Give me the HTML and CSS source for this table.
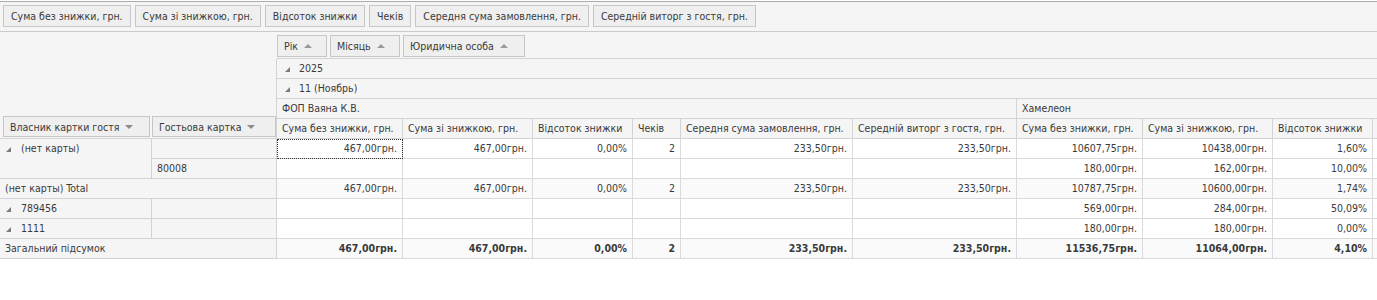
FILE: index.html
```html
<!DOCTYPE html>
<html lang="uk">
<head>
<meta charset="utf-8">
<title>Pivot</title>
<link rel="stylesheet" href="styles.css">
</head>
<body>
<div class="filter-area">
  <div class="fbtn">Сума без знижки, грн.</div>
  <div class="fbtn">Сума зі знижкою, грн.</div>
  <div class="fbtn">Відсоток знижки</div>
  <div class="fbtn">Чеків</div>
  <div class="fbtn">Середня сума замовлення, грн.</div>
  <div class="fbtn">Середній виторг з гостя, грн.</div>
</div>
<div class="pivot">
  <div class="corner">
    <div class="corner-top"></div>
    <div class="corner-bottom">
      <div class="fbtn rowfield rf1">Власник картки гостя<span class="arr-down"></span></div>
      <div class="fbtn rowfield rf2">Гостьова картка<span class="arr-down"></span></div>
    </div>
  </div>
  <div class="colfields">
    <div class="fbtn cf1">Рік<span class="arr-up"></span></div>
    <div class="fbtn cf2">Місяць<span class="arr-up"></span></div>
    <div class="fbtn cf3">Юридична особа<span class="arr-up"></span></div>
  </div>
  <div class="hcell span-all"><span class="exp hexp"></span>2025</div>
  <div class="hcell span-all"><span class="exp hexp"></span>11 (Ноябрь)</div>
  <div class="hcell fop">ФОП Ваяна К.В.</div>
  <div class="hcell ham">Хамелеон</div>
  <div class="hcell">Сума без знижки, грн.</div>
  <div class="hcell">Сума зі знижкою, грн.</div>
  <div class="hcell">Відсоток знижки</div>
  <div class="hcell">Чеків</div>
  <div class="hcell">Середня сума замовлення, грн.</div>
  <div class="hcell">Середній виторг з гостя, грн.</div>
  <div class="hcell">Сума без знижки, грн.</div>
  <div class="hcell">Сума зі знижкою, грн.</div>
  <div class="hcell">Відсоток знижки</div>
  <div class="hcell"></div>

  <!-- row 1 -->
  <div class="rh span-rows"><div class="rh-line"><span class="exp"></span>(нет карты)</div></div>
  <div class="rh"></div>
  <div class="dc focus">467,00грн.</div>
  <div class="dc">467,00грн.</div>
  <div class="dc">0,00%</div>
  <div class="dc">2</div>
  <div class="dc">233,50грн.</div>
  <div class="dc">233,50грн.</div>
  <div class="dc">10607,75грн.</div>
  <div class="dc">10438,00грн.</div>
  <div class="dc">1,60%</div>
  <div class="dc"></div>

  <!-- row 2 -->
  <div class="rh">80008</div>
  <div class="dc"></div>
  <div class="dc"></div>
  <div class="dc"></div>
  <div class="dc"></div>
  <div class="dc"></div>
  <div class="dc"></div>
  <div class="dc">180,00грн.</div>
  <div class="dc">162,00грн.</div>
  <div class="dc">10,00%</div>
  <div class="dc"></div>

  <!-- row 3 -->
  <div class="rh span-cols">(нет карты) Total</div>
  <div class="dc tot">467,00грн.</div>
  <div class="dc tot">467,00грн.</div>
  <div class="dc tot">0,00%</div>
  <div class="dc tot">2</div>
  <div class="dc tot">233,50грн.</div>
  <div class="dc tot">233,50грн.</div>
  <div class="dc tot">10787,75грн.</div>
  <div class="dc tot">10600,00грн.</div>
  <div class="dc tot">1,74%</div>
  <div class="dc tot"></div>

  <!-- row 4 -->
  <div class="rh"><span class="exp"></span>789456</div>
  <div class="rh"></div>
  <div class="dc"></div>
  <div class="dc"></div>
  <div class="dc"></div>
  <div class="dc"></div>
  <div class="dc"></div>
  <div class="dc"></div>
  <div class="dc">569,00грн.</div>
  <div class="dc">284,00грн.</div>
  <div class="dc">50,09%</div>
  <div class="dc"></div>

  <!-- row 5 -->
  <div class="rh"><span class="exp"></span>1111</div>
  <div class="rh"></div>
  <div class="dc"></div>
  <div class="dc"></div>
  <div class="dc"></div>
  <div class="dc"></div>
  <div class="dc"></div>
  <div class="dc"></div>
  <div class="dc">180,00грн.</div>
  <div class="dc">180,00грн.</div>
  <div class="dc">0,00%</div>
  <div class="dc"></div>

  <!-- grand total -->
  <div class="rh span-cols">Загальний підсумок</div>
  <div class="dc tot grand">467,00грн.</div>
  <div class="dc tot grand">467,00грн.</div>
  <div class="dc tot grand">0,00%</div>
  <div class="dc tot grand">2</div>
  <div class="dc tot grand">233,50грн.</div>
  <div class="dc tot grand">233,50грн.</div>
  <div class="dc tot grand">11536,75грн.</div>
  <div class="dc tot grand">11064,00грн.</div>
  <div class="dc tot grand">4,10%</div>
  <div class="dc tot grand"></div>
</div>
</body>
</html>
```

FILE: styles.css
```css
* {
  box-sizing: border-box;
}

html,
body {
  margin: 0;
  padding: 0;
  background: #ffffff;
}

body {
  width: 1377px;
  overflow: hidden;
  font-family: "DejaVu Sans Condensed", "DejaVu Sans", sans-serif;
  font-stretch: condensed;
  font-size: 10.5px;
  color: #3a3a3a;
}

/* ---------- filter (data field) area ---------- */
.filter-area {
  margin-top: 1px;
  height: 31px;
  border-top: 1px solid #ababab;
  border-bottom: 1px solid #cbcbcb;
  background: #f5f5f5;
  display: flex;
  align-items: flex-start;
  gap: 4px;
  padding: 3px 0 0 3px;
}

.fbtn {
  height: 22px;
  line-height: 20px;
  padding: 0 7px;
  border: 1px solid #c6c6c6;
  background: #efefef;
  white-space: nowrap;
  display: flex;
  align-items: center;
  flex: none;
}

/* ---------- pivot grid ---------- */
.pivot {
  display: grid;
  grid-template-columns: 152px 125px 126px 130px 100px 48px 172px 164px 126px 130px 100px 1fr;
  grid-template-rows: 27px repeat(10, 20px);
  background: #ffffff;
}

.corner {
  grid-column: 1 / 3;
  grid-row: 1 / 6;
  display: flex;
  flex-direction: column;
  background: #f5f5f5;
}

.corner-top {
  height: 27px;
  flex: none;
}

.corner-bottom {
  flex: 1;
  border-right: 1px solid #d3d3d3;
  border-bottom: 1px solid #d3d3d3;
  display: flex;
  align-items: flex-end;
  gap: 2px;
  padding: 0 0 1px 3px;
}

.rowfield {
  height: 21px;
  padding: 0 6px;
}

.rf1 {
  width: 147px;
}

.rf2 {
  width: 124px;
}

.colfields {
  grid-column: 3 / -1;
  grid-row: 1;
  background: #f5f5f5;
  border-bottom: 1px solid #d3d3d3;
  display: flex;
  align-items: flex-start;
  gap: 3px;
  padding-top: 3px;
}

.colfields .fbtn {
  padding: 0 6px;
}

.cf1 {
  width: 50px;
}

.cf2 {
  width: 70px;
}

.cf3 {
  width: 122px;
}

.arr-down,
.arr-up {
  display: inline-block;
  width: 0;
  height: 0;
  margin-left: 6px;
  border-left: 4px solid transparent;
  border-right: 4px solid transparent;
}

.arr-down {
  border-top: 4px solid #8c8c8c;
}

.arr-up {
  border-bottom: 4px solid #9a9a9a;
}

.hcell,
.rh,
.dc {
  line-height: 19px;
  white-space: nowrap;
  overflow: hidden;
  border-right: 1px solid #d3d3d3;
  border-bottom: 1px solid #d3d3d3;
  padding: 0 5px;
}

.hcell {
  background: #f5f5f5;
  display: flex;
  align-items: center;
}

.span-all {
  grid-column: 3 / -1;
  border-right: none;
}

.fop {
  grid-column: 3 / 9;
}

.ham {
  grid-column: 9 / -1;
  border-right: none;
}

.exp {
  display: inline-block;
  flex: none;
  width: 0;
  height: 0;
  border-left: 5px solid transparent;
  border-bottom: 5px solid #7c7c7c;
  margin: 2px 10px 0 1px;
}

.hexp {
  margin-left: 3px;
  margin-right: 9px;
}

.rh {
  background: #f5f5f5;
  display: flex;
  align-items: center;
}

.span-rows {
  grid-row: span 2;
  align-items: flex-start;
}

.rh-line {
  height: 19px;
  display: flex;
  align-items: center;
}

.span-cols {
  grid-column: span 2;
}

.dc {
  text-align: right;
  background: #ffffff;
  border-color: #dadada;
}

.dc.tot {
  background: #fafafa;
}

.grand {
  font-weight: bold;
}

.focus {
  outline: 1px dotted #333333;
  outline-offset: -1px;
}
```
